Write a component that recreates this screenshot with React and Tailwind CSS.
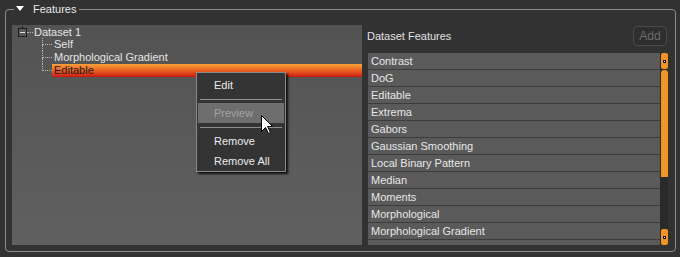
import React from 'react';

const features = [
  'Contrast',
  'DoG',
  'Editable',
  'Extrema',
  'Gabors',
  'Gaussian Smoothing',
  'Local Binary Pattern',
  'Median',
  'Moments',
  'Morphological',
  'Morphological Gradient',
];

const children = ['Self', 'Morphological Gradient', 'Editable'];

const Dot = () => <div className="w-[3px] h-[3px] bg-white border border-black" />;

const ScrollButton = () => (
  <div className="h-[16px] w-[7px] ml-px rounded-[2px] bg-[#f39423] flex items-center justify-center">
    <Dot />
  </div>
);

const TreeNode = ({ label, last, selected }) => (
  <div className="h-[13px] flex">
    <div className="w-[10px] flex flex-col">
      <div className="h-[7px] border-l border-b border-dotted border-[#b8b8b8]" />
      {last ? <div className="flex-1" /> : <div className="flex-1 border-l border-dotted border-[#b8b8b8]" />}
    </div>
    {selected ? (
      <div className="flex-1 px-[2px] leading-[13px] text-[#1a1a1a] bg-gradient-to-b from-[#f7a135] via-[#ea5f22] to-[#cc1010]">
        {label}
      </div>
    ) : (
      <div className="px-[2px] leading-[13px] text-[#e6e6e6]">{label}</div>
    )}
  </div>
);

const MenuItem = ({ label, active }) =>
  active ? (
    <div className="h-[20px] mx-px pl-[16px] flex items-center bg-[#6e6e6e] text-[#a4a4a4]">{label}</div>
  ) : (
    <div className="h-[20px] pl-[17px] flex items-center text-[#ececec]">{label}</div>
  );

const Separator = () => (
  <div className="h-[8px] pt-[4px] mx-[3px]">
    <div className="h-px bg-[#8e8e8e]" />
  </div>
);

const App = () => {
  return (
    <div
      className="relative w-[680px] h-[257px] overflow-hidden bg-[#323232] text-[11px]"
      style={{ fontFamily: '"Liberation Sans", Arial, sans-serif' }}
    >
      <fieldset className="ml-[5px] w-[671px] border border-[#8c8c8c] rounded-[4px]">
        <legend className="ml-[8px] pl-[2px] pr-[3px] h-[18px] leading-[18px] text-[#e8e8e8]">
          <span className="inline-block align-middle mb-[3px] w-0 h-0 border-l-[4.5px] border-r-[4.5px] border-t-[5px] border-l-transparent border-r-transparent border-t-white" />
          <span className="ml-[9px]">Features</span>
        </legend>

        <div className="flex gap-[6px] pl-[6px] pr-[7px] pt-[7px] pb-[6px]">
          {/* Tree */}
          <div className="w-[350px] h-[220px] bg-gradient-to-b from-[#535353] to-[#606060]">
            <div className="h-[13px] flex items-center pl-[6px] pt-px">
              <div className="relative w-[9px] h-[9px] border border-[#1c1c1c] bg-[#5a5a5a] flex items-center justify-center">
                <div className="w-[5px] h-px bg-[#e0e0e0]" />
                <div className="absolute left-[3px] -top-[3px] w-px h-[2px] bg-[#1c1c1c]" />
              </div>
              <div className="w-[6px] border-t border-dotted border-[#b8b8b8]" />
              <span className="ml-px leading-[13px] text-[#e6e6e6]">Dataset 1</span>
            </div>
            <div className="pl-[30px]">
              {children.map((c, i) => (
                <TreeNode key={c} label={c} last={i === children.length - 1} selected={c === 'Editable'} />
              ))}
            </div>
          </div>

          {/* Dataset features */}
          <div className="w-[300px] h-[220px] flex flex-col">
            <div className="h-[28px] flex justify-between">
              <span className="-ml-px mt-[5px] leading-[13px] text-[#e2e2e2]">Dataset Features</span>
              <button className="mt-px mr-px w-[34px] h-[20px] rounded-[4px] border border-[#4a4a4a] bg-[#2e2e2e] text-[12px] text-[#6c6c6c]">
                Add
              </button>
            </div>
            <div className="flex-1 flex">
              <div className="w-[292px] bg-[#5a5a5a] overflow-hidden">
                {features.map((f) => (
                  <div
                    key={f}
                    className="h-[17px] pl-[3px] pt-px leading-[15px] border-b border-[#3c3c3c] text-[#e8e8e8]"
                  >
                    {f}
                  </div>
                ))}
              </div>
              <div className="w-[8px] bg-[#2a2a2a] flex flex-col">
                <ScrollButton />
                <div className="mt-px ml-px w-[7px] h-[107px] rounded-t-[3px] bg-[#f39423]" />
                <div className="flex-1" />
                <ScrollButton />
              </div>
            </div>
          </div>
        </div>
      </fieldset>

      {/* Context menu */}
      <div className="absolute left-[196px] top-[72px] w-[90px] pt-[2px] border border-[#8a8a8a] bg-[#343434] shadow-[2px_2px_2px_rgba(0,0,0,0.85)]">
        <MenuItem label="Edit" />
        <Separator />
        <MenuItem label="Preview" active />
        <Separator />
        <MenuItem label="Remove" />
        <MenuItem label="Remove All" />
      </div>

      {/* Mouse cursor */}
      <svg className="absolute left-[261px] top-[115px]" width="13" height="20" viewBox="0 0 13 20">
        <path
          d="M0.5 0.5 L0.5 16.5 L4.5 12.5 L7.5 18.5 L9.5 17.5 L6.5 11.5 L11.5 11.5 Z"
          fill="#ffffff"
          stroke="#000000"
          strokeWidth="1"
        />
      </svg>
    </div>
  );
};

export default App;
